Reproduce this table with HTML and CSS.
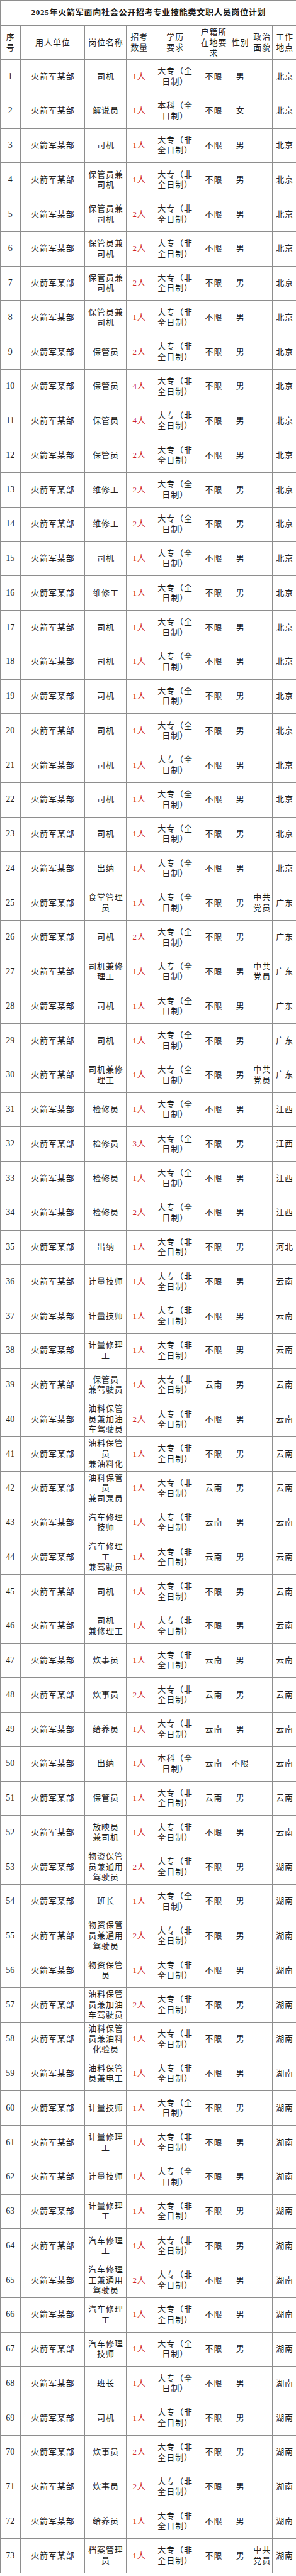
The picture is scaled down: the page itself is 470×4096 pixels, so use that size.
FILE: index.html
```html
<!DOCTYPE html>
<html lang="zh-CN">
<head>
<meta charset="utf-8">
<title>2025年火箭军面向社会公开招考专业技能类文职人员岗位计划</title>
<link rel="stylesheet" href="styles.css">
</head>
<body>
<table class="plan">
<colgroup>
<col class="c-no"><col class="c-unit"><col class="c-post"><col class="c-cnt"><col class="c-edu"><col class="c-hk"><col class="c-sex"><col class="c-pol"><col class="c-loc">
</colgroup>
<thead>
<tr class="title-row"><th colspan="9" class="title">2025年火箭军面向社会公开招考专业技能类文职人员岗位计划</th></tr>
<tr class="head-row"><th>序<br>号</th><th>用人单位</th><th>岗位名称</th><th>招考<br>数量</th><th>学历<br>要求</th><th>户籍所<br>在地要<br>求</th><th>性别</th><th>政治<br>面貌</th><th>工作<br>地点</th></tr>
</thead>
<tbody>
<tr><td class="n">1</td><td>火箭军某部</td><td>司机</td><td class="c">1人</td><td>大专（全<br>日制）</td><td>不限</td><td>男</td><td></td><td>北京</td></tr>
<tr><td class="n">2</td><td>火箭军某部</td><td>解说员</td><td class="c">1人</td><td>本科（全<br>日制）</td><td>不限</td><td>女</td><td></td><td>北京</td></tr>
<tr><td class="n">3</td><td>火箭军某部</td><td>司机</td><td class="c">1人</td><td>大专（非<br>全日制）</td><td>不限</td><td>男</td><td></td><td>北京</td></tr>
<tr><td class="n">4</td><td>火箭军某部</td><td>保管员兼<br>司机</td><td class="c">1人</td><td>大专（非<br>全日制）</td><td>不限</td><td>男</td><td></td><td>北京</td></tr>
<tr><td class="n">5</td><td>火箭军某部</td><td>保管员兼<br>司机</td><td class="c">2人</td><td>大专（非<br>全日制）</td><td>不限</td><td>男</td><td></td><td>北京</td></tr>
<tr><td class="n">6</td><td>火箭军某部</td><td>保管员兼<br>司机</td><td class="c">2人</td><td>大专（非<br>全日制）</td><td>不限</td><td>男</td><td></td><td>北京</td></tr>
<tr><td class="n">7</td><td>火箭军某部</td><td>保管员兼<br>司机</td><td class="c">2人</td><td>大专（非<br>全日制）</td><td>不限</td><td>男</td><td></td><td>北京</td></tr>
<tr><td class="n">8</td><td>火箭军某部</td><td>保管员兼<br>司机</td><td class="c">1人</td><td>大专（非<br>全日制）</td><td>不限</td><td>男</td><td></td><td>北京</td></tr>
<tr><td class="n">9</td><td>火箭军某部</td><td>保管员</td><td class="c">2人</td><td>大专（非<br>全日制）</td><td>不限</td><td>男</td><td></td><td>北京</td></tr>
<tr><td class="n">10</td><td>火箭军某部</td><td>保管员</td><td class="c">4人</td><td>大专（非<br>全日制）</td><td>不限</td><td>男</td><td></td><td>北京</td></tr>
<tr><td class="n">11</td><td>火箭军某部</td><td>保管员</td><td class="c">4人</td><td>大专（非<br>全日制）</td><td>不限</td><td>男</td><td></td><td>北京</td></tr>
<tr><td class="n">12</td><td>火箭军某部</td><td>保管员</td><td class="c">2人</td><td>大专（非<br>全日制）</td><td>不限</td><td>男</td><td></td><td>北京</td></tr>
<tr><td class="n">13</td><td>火箭军某部</td><td>维修工</td><td class="c">2人</td><td>大专（全<br>日制）</td><td>不限</td><td>男</td><td></td><td>北京</td></tr>
<tr><td class="n">14</td><td>火箭军某部</td><td>维修工</td><td class="c">2人</td><td>大专（全<br>日制）</td><td>不限</td><td>男</td><td></td><td>北京</td></tr>
<tr><td class="n">15</td><td>火箭军某部</td><td>司机</td><td class="c">1人</td><td>大专（全<br>日制）</td><td>不限</td><td>男</td><td></td><td>北京</td></tr>
<tr><td class="n">16</td><td>火箭军某部</td><td>维修工</td><td class="c">1人</td><td>大专（全<br>日制）</td><td>不限</td><td>男</td><td></td><td>北京</td></tr>
<tr><td class="n">17</td><td>火箭军某部</td><td>司机</td><td class="c">1人</td><td>大专（全<br>日制）</td><td>不限</td><td>男</td><td></td><td>北京</td></tr>
<tr><td class="n">18</td><td>火箭军某部</td><td>司机</td><td class="c">1人</td><td>大专（全<br>日制）</td><td>不限</td><td>男</td><td></td><td>北京</td></tr>
<tr><td class="n">19</td><td>火箭军某部</td><td>司机</td><td class="c">1人</td><td>大专（全<br>日制）</td><td>不限</td><td>男</td><td></td><td>北京</td></tr>
<tr><td class="n">20</td><td>火箭军某部</td><td>司机</td><td class="c">1人</td><td>大专（全<br>日制）</td><td>不限</td><td>男</td><td></td><td>北京</td></tr>
<tr><td class="n">21</td><td>火箭军某部</td><td>司机</td><td class="c">1人</td><td>大专（全<br>日制）</td><td>不限</td><td>男</td><td></td><td>北京</td></tr>
<tr><td class="n">22</td><td>火箭军某部</td><td>司机</td><td class="c">1人</td><td>大专（全<br>日制）</td><td>不限</td><td>男</td><td></td><td>北京</td></tr>
<tr><td class="n">23</td><td>火箭军某部</td><td>司机</td><td class="c">1人</td><td>大专（全<br>日制）</td><td>不限</td><td>男</td><td></td><td>北京</td></tr>
<tr><td class="n">24</td><td>火箭军某部</td><td>出纳</td><td class="c">1人</td><td>大专（全<br>日制）</td><td>不限</td><td>男</td><td></td><td>北京</td></tr>
<tr><td class="n">25</td><td>火箭军某部</td><td>食堂管理<br>员</td><td class="c">1人</td><td>大专（全<br>日制）</td><td>不限</td><td>男</td><td>中共<br>党员</td><td>广东</td></tr>
<tr><td class="n">26</td><td>火箭军某部</td><td>司机</td><td class="c">2人</td><td>大专（全<br>日制）</td><td>不限</td><td>男</td><td></td><td>广东</td></tr>
<tr><td class="n">27</td><td>火箭军某部</td><td>司机兼修<br>理工</td><td class="c">1人</td><td>大专（全<br>日制）</td><td>不限</td><td>男</td><td>中共<br>党员</td><td>广东</td></tr>
<tr><td class="n">28</td><td>火箭军某部</td><td>司机</td><td class="c">1人</td><td>大专（全<br>日制）</td><td>不限</td><td>男</td><td></td><td>广东</td></tr>
<tr><td class="n">29</td><td>火箭军某部</td><td>司机</td><td class="c">1人</td><td>大专（全<br>日制）</td><td>不限</td><td>男</td><td></td><td>广东</td></tr>
<tr><td class="n">30</td><td>火箭军某部</td><td>司机兼修<br>理工</td><td class="c">1人</td><td>大专（全<br>日制）</td><td>不限</td><td>男</td><td>中共<br>党员</td><td>广东</td></tr>
<tr><td class="n">31</td><td>火箭军某部</td><td>检修员</td><td class="c">1人</td><td>大专（全<br>日制）</td><td>不限</td><td>男</td><td></td><td>江西</td></tr>
<tr><td class="n">32</td><td>火箭军某部</td><td>检修员</td><td class="c">3人</td><td>大专（全<br>日制）</td><td>不限</td><td>男</td><td></td><td>江西</td></tr>
<tr><td class="n">33</td><td>火箭军某部</td><td>检修员</td><td class="c">1人</td><td>大专（全<br>日制）</td><td>不限</td><td>男</td><td></td><td>江西</td></tr>
<tr><td class="n">34</td><td>火箭军某部</td><td>检修员</td><td class="c">2人</td><td>大专（全<br>日制）</td><td>不限</td><td>男</td><td></td><td>江西</td></tr>
<tr><td class="n">35</td><td>火箭军某部</td><td>出纳</td><td class="c">1人</td><td>大专（非<br>全日制）</td><td>不限</td><td>男</td><td></td><td>河北</td></tr>
<tr><td class="n">36</td><td>火箭军某部</td><td>计量技师</td><td class="c">1人</td><td>大专（非<br>全日制）</td><td>不限</td><td>男</td><td></td><td>云南</td></tr>
<tr><td class="n">37</td><td>火箭军某部</td><td>计量技师</td><td class="c">1人</td><td>大专（非<br>全日制）</td><td>不限</td><td>男</td><td></td><td>云南</td></tr>
<tr><td class="n">38</td><td>火箭军某部</td><td>计量修理<br>工</td><td class="c">1人</td><td>大专（非<br>全日制）</td><td>不限</td><td>男</td><td></td><td>云南</td></tr>
<tr><td class="n">39</td><td>火箭军某部</td><td>保管员<br>兼驾驶员</td><td class="c">1人</td><td>大专（非<br>全日制）</td><td>云南</td><td>男</td><td></td><td>云南</td></tr>
<tr><td class="n">40</td><td>火箭军某部</td><td>油料保管<br>员兼加油<br>车驾驶员</td><td class="c">2人</td><td>大专（非<br>全日制）</td><td>不限</td><td>男</td><td></td><td>云南</td></tr>
<tr><td class="n">41</td><td>火箭军某部</td><td>油料保管<br>员<br>兼油料化</td><td class="c">1人</td><td>大专（非<br>全日制）</td><td>不限</td><td>男</td><td></td><td>云南</td></tr>
<tr><td class="n">42</td><td>火箭军某部</td><td>油料保管<br>员<br>兼司泵员</td><td class="c">1人</td><td>大专（非<br>全日制）</td><td>云南</td><td>男</td><td></td><td>云南</td></tr>
<tr><td class="n">43</td><td>火箭军某部</td><td>汽车修理<br>技师</td><td class="c">1人</td><td>大专（非<br>全日制）</td><td>云南</td><td>男</td><td></td><td>云南</td></tr>
<tr><td class="n">44</td><td>火箭军某部</td><td>汽车修理<br>工<br>兼驾驶员</td><td class="c">1人</td><td>大专（非<br>全日制）</td><td>云南</td><td>男</td><td></td><td>云南</td></tr>
<tr><td class="n">45</td><td>火箭军某部</td><td>司机</td><td class="c">1人</td><td>大专（非<br>全日制）</td><td>不限</td><td>男</td><td></td><td>云南</td></tr>
<tr><td class="n">46</td><td>火箭军某部</td><td>司机<br>兼修理工</td><td class="c">1人</td><td>大专（非<br>全日制）</td><td>不限</td><td>男</td><td></td><td>云南</td></tr>
<tr><td class="n">47</td><td>火箭军某部</td><td>炊事员</td><td class="c">1人</td><td>大专（非<br>全日制）</td><td>云南</td><td>男</td><td></td><td>云南</td></tr>
<tr><td class="n">48</td><td>火箭军某部</td><td>炊事员</td><td class="c">2人</td><td>大专（非<br>全日制）</td><td>云南</td><td>男</td><td></td><td>云南</td></tr>
<tr><td class="n">49</td><td>火箭军某部</td><td>给养员</td><td class="c">1人</td><td>大专（非<br>全日制）</td><td>云南</td><td>男</td><td></td><td>云南</td></tr>
<tr><td class="n">50</td><td>火箭军某部</td><td>出纳</td><td class="c">1人</td><td>本科（全<br>日制）</td><td>云南</td><td>不限</td><td></td><td>云南</td></tr>
<tr><td class="n">51</td><td>火箭军某部</td><td>保管员</td><td class="c">1人</td><td>大专（非<br>全日制）</td><td>云南</td><td>男</td><td></td><td>云南</td></tr>
<tr><td class="n">52</td><td>火箭军某部</td><td>放映员<br>兼司机</td><td class="c">1人</td><td>大专（非<br>全日制）</td><td>不限</td><td>男</td><td></td><td>云南</td></tr>
<tr><td class="n">53</td><td>火箭军某部</td><td>物资保管<br>员兼通用<br>驾驶员</td><td class="c">2人</td><td>大专（非<br>全日制）</td><td>不限</td><td>男</td><td></td><td>湖南</td></tr>
<tr><td class="n">54</td><td>火箭军某部</td><td>班长</td><td class="c">1人</td><td>大专（全<br>日制）</td><td>不限</td><td>男</td><td></td><td>湖南</td></tr>
<tr><td class="n">55</td><td>火箭军某部</td><td>物资保管<br>员兼通用<br>驾驶员</td><td class="c">2人</td><td>大专（非<br>全日制）</td><td>不限</td><td>男</td><td></td><td>湖南</td></tr>
<tr><td class="n">56</td><td>火箭军某部</td><td>物资保管<br>员</td><td class="c">1人</td><td>大专（非<br>全日制）</td><td>不限</td><td>男</td><td></td><td>湖南</td></tr>
<tr><td class="n">57</td><td>火箭军某部</td><td>油料保管<br>员兼加油<br>车驾驶员</td><td class="c">2人</td><td>大专（非<br>全日制）</td><td>不限</td><td>男</td><td></td><td>湖南</td></tr>
<tr><td class="n">58</td><td>火箭军某部</td><td>油料保管<br>员兼油料<br>化验员</td><td class="c">1人</td><td>大专（非<br>全日制）</td><td>不限</td><td>男</td><td></td><td>湖南</td></tr>
<tr><td class="n">59</td><td>火箭军某部</td><td>油料保管<br>员兼电工</td><td class="c">1人</td><td>大专（非<br>全日制）</td><td>不限</td><td>男</td><td></td><td>湖南</td></tr>
<tr><td class="n">60</td><td>火箭军某部</td><td>计量技师</td><td class="c">1人</td><td>大专（全<br>日制）</td><td>不限</td><td>男</td><td></td><td>湖南</td></tr>
<tr><td class="n">61</td><td>火箭军某部</td><td>计量修理<br>工</td><td class="c">1人</td><td>大专（非<br>全日制）</td><td>不限</td><td>男</td><td></td><td>湖南</td></tr>
<tr><td class="n">62</td><td>火箭军某部</td><td>计量技师</td><td class="c">1人</td><td>大专（全<br>日制）</td><td>不限</td><td>男</td><td></td><td>湖南</td></tr>
<tr><td class="n">63</td><td>火箭军某部</td><td>计量修理<br>工</td><td class="c">1人</td><td>大专（非<br>全日制）</td><td>不限</td><td>男</td><td></td><td>湖南</td></tr>
<tr><td class="n">64</td><td>火箭军某部</td><td>汽车修理<br>工</td><td class="c">1人</td><td>大专（非<br>全日制）</td><td>不限</td><td>男</td><td></td><td>湖南</td></tr>
<tr><td class="n">65</td><td>火箭军某部</td><td>汽车修理<br>工兼通用<br>驾驶员</td><td class="c">2人</td><td>大专（非<br>全日制）</td><td>不限</td><td>男</td><td></td><td>湖南</td></tr>
<tr><td class="n">66</td><td>火箭军某部</td><td>汽车修理<br>工</td><td class="c">1人</td><td>大专（非<br>全日制）</td><td>不限</td><td>男</td><td></td><td>湖南</td></tr>
<tr><td class="n">67</td><td>火箭军某部</td><td>汽车修理<br>技师</td><td class="c">1人</td><td>大专（全<br>日制）</td><td>不限</td><td>男</td><td></td><td>湖南</td></tr>
<tr><td class="n">68</td><td>火箭军某部</td><td>班长</td><td class="c">1人</td><td>大专（全<br>日制）</td><td>不限</td><td>男</td><td></td><td>湖南</td></tr>
<tr><td class="n">69</td><td>火箭军某部</td><td>司机</td><td class="c">1人</td><td>大专（非<br>全日制）</td><td>不限</td><td>男</td><td></td><td>湖南</td></tr>
<tr><td class="n">70</td><td>火箭军某部</td><td>炊事员</td><td class="c">2人</td><td>大专（非<br>全日制）</td><td>不限</td><td>男</td><td></td><td>湖南</td></tr>
<tr><td class="n">71</td><td>火箭军某部</td><td>炊事员</td><td class="c">2人</td><td>大专（非<br>全日制）</td><td>不限</td><td>男</td><td></td><td>湖南</td></tr>
<tr><td class="n">72</td><td>火箭军某部</td><td>给养员</td><td class="c">1人</td><td>大专（非<br>全日制）</td><td>不限</td><td>男</td><td></td><td>湖南</td></tr>
<tr><td class="n">73</td><td>火箭军某部</td><td>档案管理<br>员</td><td class="c">1人</td><td>大专（非<br>全日制）</td><td>不限</td><td>男</td><td>中共<br>党员</td><td>湖南</td></tr>
</tbody>
</table>
</body>
</html>
```

FILE: styles.css
```css
html, body {
  margin: 0;
  padding: 0;
  background: #ffffff;
}

.plan {
  width: 470px;
  border-collapse: collapse;
  table-layout: fixed;
  font-family: "Liberation Serif", "Noto Sans CJK SC", serif;
  font-size: 13px;
  color: #1e1e1e;
}

.c-no { width: 31.5px; }
.c-unit { width: 102.9px; }
.c-post { width: 65.3px; }
.c-cnt { width: 40.9px; }
.c-edu { width: 73.3px; }
.c-hk { width: 49.4px; }
.c-sex { width: 34.8px; }
.c-pol { width: 34.3px; }
.c-loc { width: 37.6px; }

.plan th,
.plan td {
  border: 1px solid #8e8e8e;
  padding: 0 0 0 0.9px;
  text-align: center;
  vertical-align: middle;
  line-height: 16.6px;
  letter-spacing: 0.9px;
  white-space: nowrap;
  overflow: hidden;
  font-weight: normal;
}

.title-row {
  height: 39.5px;
}

.plan .title {
  font-weight: bold;
  letter-spacing: 0.75px;
  color: #1a1a1a;
}

.head-row {
  height: 54.5px;
}

.head-row th {
  line-height: 17px;
}

.plan tbody tr {
  height: 54.75px;
}

.plan td.n {
  font-size: 14px;
  letter-spacing: 0;
  padding: 0;
}

.plan td.c {
  color: #cf1f25;
}
```
